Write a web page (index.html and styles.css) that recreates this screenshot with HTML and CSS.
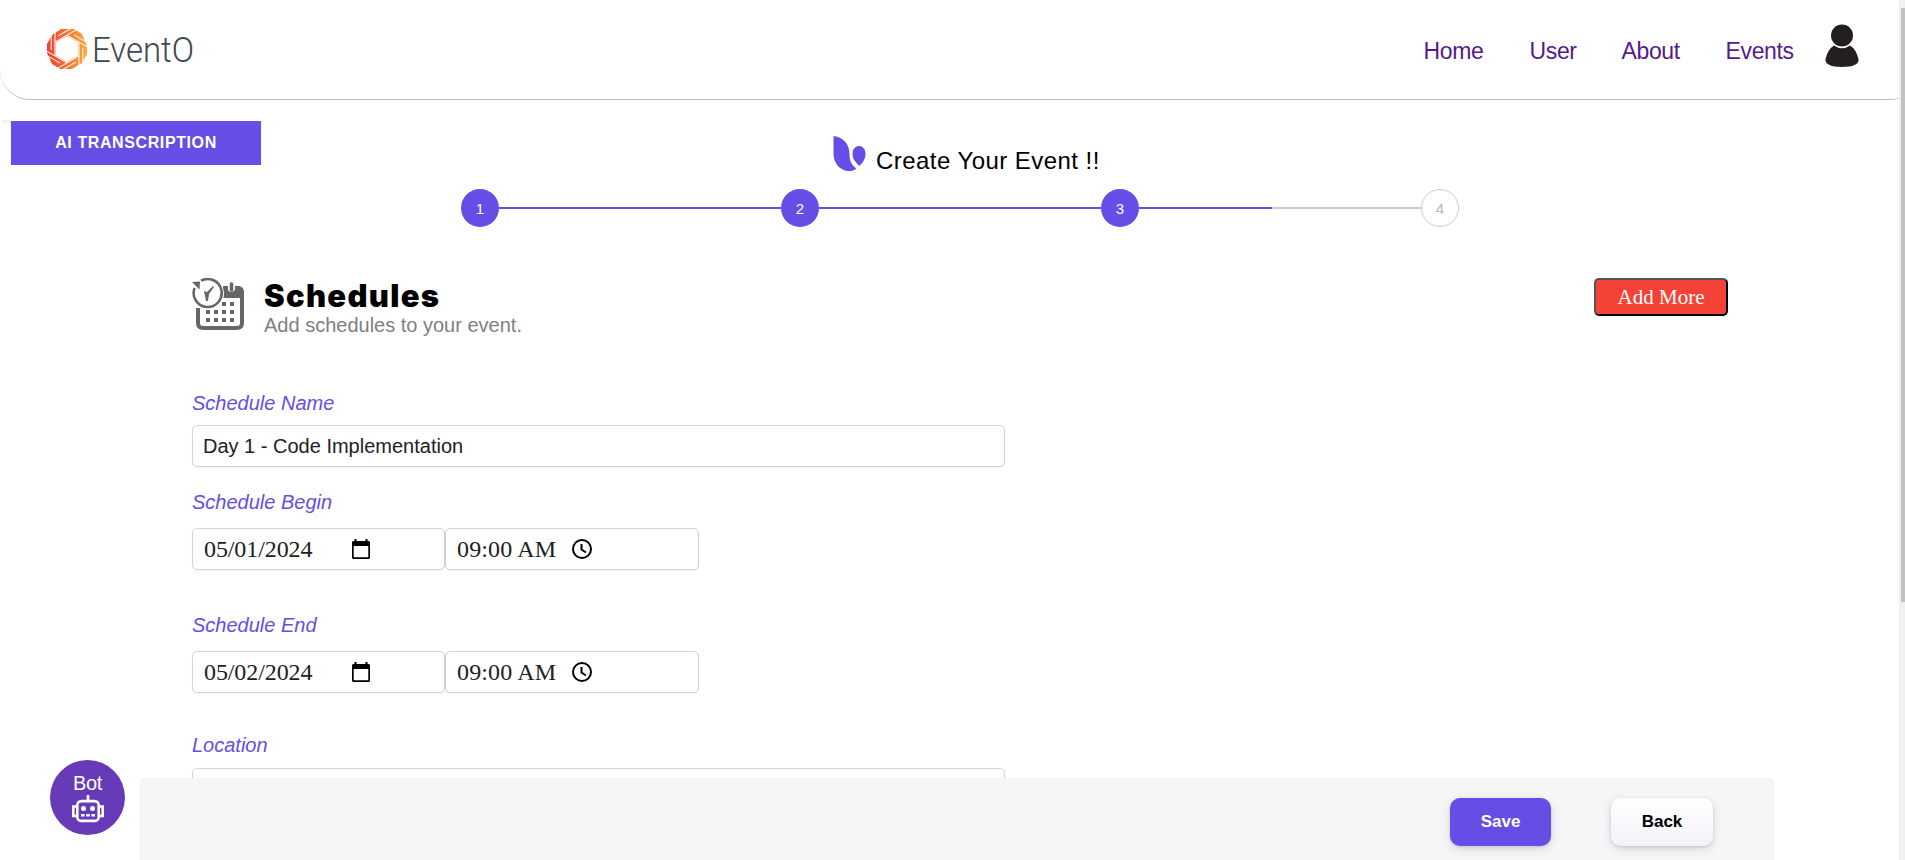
FILE: index.html
```html
<!DOCTYPE html>
<html lang="en">
<head>
<meta charset="utf-8">
<title>EventO</title>
<link rel="stylesheet" href="styles.css">
</head>
<body>
<div class="page">
  <header class="header">
    <div class="brand">
      <svg class="brand-mark" viewBox="0 0 42 42">
        <defs>
          <linearGradient id="g" x1="0" x2="1"><stop offset="0" stop-color="#f0402f"/><stop offset=".5" stop-color="#f47438"/><stop offset="1" stop-color="#fbab3c"/></linearGradient>
          <path id="blade" d="M-7 -12H17M-1 -15.800H14"/>
        </defs>
        <path fill="url(#g)" fill-rule="evenodd" d="M15 1h13l8 5 5 12v8l-5 9-10 6H14l-8-5-5-11v-9l5-9zM21 8L9.700 14.500v13L21 34l11.300-6.500v-13z"/>
        <g fill="none" stroke="#fff" stroke-width="1" transform="translate(21 21) rotate(30)">
          <use href="#blade"/><use href="#blade" transform="rotate(60)"/><use href="#blade" transform="rotate(120)"/><use href="#blade" transform="rotate(180)"/><use href="#blade" transform="rotate(240)"/><use href="#blade" transform="rotate(300)"/>
        </g>
      </svg>
      <svg class="brand-name" viewBox="0 0 110 44"><text x="0" y="34" textLength="102" lengthAdjust="spacingAndGlyphs">EventO</text></svg>
    </div>
    <nav class="nav">
      <a class="home">Home</a><a class="user">User</a><a class="about">About</a><a class="events">Events</a>
      <svg class="avatar" viewBox="0 0 34 44"><circle cx="17" cy="11.500" r="11"/><path d="M9 21.500Q17 27 25 21.500Q31 25 33.500 35Q34.500 43 17 43Q-.5 43 .5 35Q3 25 9 21.500Z"/></svg>
    </nav>
  </header>
  <main class="main">
    <div class="intro">
      <div class="tab"><span class="tab-edge"></span><button class="ai">AI TRANSCRIPTION</button></div>
      <h1 class="title">
        <svg class="leaf" viewBox="0 0 33 36"><path d="M.5 0C11 1 16.500 9 16.500 18c0 7 2 11 7 14.500C21 34.500 19 35 16 35 7 35 .5 27 .5 18z"/><path d="M26.500 30C21 25 19.500 22 19.500 18c0-5 3-8 6.500-8s6.500 3 6.500 8c0 4-2 8-6 12z"/></svg>
        <span>Create Your Event !!</span>
      </h1>
    </div>
    <div class="stepper">
      <span class="step">1</span><span class="bar"></span><span class="step">2</span><span class="bar"></span><span class="step">3</span><span class="bar half"></span><span class="step off">4</span>
    </div>
    <section class="heading">
      <svg class="sched" viewBox="0 0 52 52" fill="none" stroke="#666">
        <path stroke-width="4" d="M6 30v15q0 5 5 5h34q5 0 5-5V18"/>
        <path fill="#666" stroke="none" d="M31 8h5v4q3 4 7 0V8h4q5 1 5 6v6H31z"/>
        <path stroke-width="3.600" stroke-linecap="round" d="M39.500 6v6"/>
        <circle cx="15.500" cy="15.500" r="16.500" fill="#fff" stroke="none"/>
        <path stroke-width="2.600" d="M9 2.700A14 14 0 1 1 2.600 10"/>
        <path fill="#666" stroke="none" d="M0 4l8-.5-.5 8zM12 13l3 1 6-6 1 1-5 7-1 7-2 0z"/>
        <path stroke-width="4" stroke-dasharray="4 4" d="M30 26h14M14 34h30M14 42h30"/>
      </svg>
      <div class="heading-text"><h2>Schedules</h2><p>Add schedules to your event.</p></div>
      <button class="add">Add More</button>
    </section>
    <form class="form">
      <label>Schedule Name</label>
      <div class="field wide">Day 1 - Code Implementation</div>
      <label class="begin">Schedule Begin</label>
      <div class="pair">
        <div class="field date"><span>05/01/2024</span><svg class="cal" viewBox="0 0 20 20"><path fill-rule="evenodd" d="M3.500 0h2v2h9V0h2v2H18l1 1v16l-1 1H2l-1-1V3l1-1h1.500zM2.700 7v11.300h14.600V7z"/></svg></div>
        <div class="field time"><span>09:00 AM</span><svg class="clock" viewBox="0 0 20 20"><circle cx="10" cy="10" r="9"/><path d="M9.500 5v5.500l4.500 3"/></svg></div>
      </div>
      <label class="end">Schedule End</label>
      <div class="pair">
        <div class="field date"><span>05/02/2024</span><svg class="cal" viewBox="0 0 20 20"><path fill-rule="evenodd" d="M3.500 0h2v2h9V0h2v2H18l1 1v16l-1 1H2l-1-1V3l1-1h1.500zM2.700 7v11.300h14.600V7z"/></svg></div>
        <div class="field time"><span>09:00 AM</span><svg class="clock" viewBox="0 0 20 20"><circle cx="10" cy="10" r="9"/><path d="M9.500 5v5.500l4.500 3"/></svg></div>
      </div>
      <label class="loc">Location</label>
      <div class="field wide"></div>
    </form>
  </main>
  <footer class="actions"><button class="save">Save</button><button class="back">Back</button></footer>
  <div class="bot"><span>Bot</span>
    <svg viewBox="0 0 32 28" fill="none" stroke="#fff" stroke-width="2.600"><rect x="5.300" y="6.100" width="21.400" height="19.800" rx="4"/><path d="M16 0v6M5 11.500H1.300v9.500H5M27 11.500h3.700v9.500H27"/><g fill="#fff" stroke="none"><circle cx="11.500" cy="13.500" r="2.500"/><circle cx="20.500" cy="13.500" r="2.500"/><path d="M9 19h3.600v2.500H9zM14.200 19h3.600v2.500h-3.600zM19.400 19H23v2.500h-3.600z"/></g></svg>
  </div>
</div>
<div class="scrollbar"><div class="thumb"></div></div>
</body>
</html>
```

FILE: styles.css
```css
* { box-sizing: border-box; }
body { margin: 0; height: 860px; display: flex; overflow: hidden; background: #fff; font-family: "Liberation Sans", Arial, sans-serif; }
button { font-family: inherit; padding: 0; }
.page { position: relative; width: 1899px; height: 860px; overflow: hidden; }
.scrollbar { width: 6px; height: 860px; background: #f0f0f0; padding: 8px 0 0 2px; }
.thumb { height: 594px; background: #c1c1c1; }

.header { width: 1920px; height: 100px; border-bottom: 1px solid #bcbfc4; border-radius: 0 0 30px 30px; display: flex; justify-content: space-between; padding-left: 46px; }
.brand { display: flex; padding-top: 28px; gap: 4px; }
.brand-mark { width: 42px; height: 42px; }
.brand-name { width: 110px; height: 44px; overflow: visible; }
.brand-name text { font: 300 35px/1 Roboto, sans-serif; fill: #40464f; }
.nav { display: flex; padding-top: 38px; width: 497px; font-size: 23px; line-height: 26px; color: #551a8b; letter-spacing: -0.35px; }
.nav a { margin-left: 0.5px; margin-right: -0.5px; }
.home { width: 106px; }
.user { width: 92px; }
.about { width: 104px; }
.events { width: 100px; }
.avatar { width: 34px; height: 44px; margin-top: -14px; fill: #231f20; }

.intro { display: flex; height: 89px; padding-top: 20px; }
.tab { display: flex; padding-left: 3px; }
.tab-edge { width: 8px; height: 3px; background: #f0f0f0; }
.ai { width: 250px; height: 44px; margin-top: 1px; border: 0; background: #664de5; color: #fff; font-size: 16px; font-weight: 700; letter-spacing: 0.6px; }
.title { display: flex; margin: 16px 0 0 572px; font-size: 24px; font-weight: 400; line-height: 28px; }
.leaf { width: 33px; height: 36px; fill: #664de5; margin-right: 10px; }
.title span { padding-top: 11px; letter-spacing: 0.45px; white-space: nowrap; }

.stepper { display: flex; align-items: center; width: 998px; height: 38px; margin-left: 461px; }
.step { flex: none; width: 38px; height: 38px; border-radius: 50%; background: #664de5; color: #fff; font-size: 15px; line-height: 40px; text-align: center; }
.step.off { background: #fff; border: 1px solid #ccc; color: #b5b5b5; line-height: 38px; }
.bar { flex: 1; height: 2px; background: #664de5; }
.bar.half { background: linear-gradient(90deg, #664de5 133px, #ccc 133px); }

.heading { display: flex; margin: 51px 171px 0 192px; height: 112px; }
.sched { width: 52px; height: 52px; }
.heading-text { flex: 1; padding-left: 20px; }
h2 { margin: 1px 0 0; font: 900 31px/34px Inter, sans-serif; letter-spacing: 1.3px; }
p { margin: 0; font-size: 20px; line-height: 24px; color: #808080; }
.add { width: 134px; height: 38px; border: 2px outset #000; border-radius: 5px; background: #f44336; color: #fff; font: 21px "Liberation Serif", serif; }

.form { padding-left: 192px; }
label { display: block; height: 35px; color: #664de5; font-size: 20px; font-style: italic; line-height: 26px; }
.field { display: flex; align-items: center; width: 253px; height: 42px; border: 1px solid #d3d3d3; border-radius: 5px; background: #fff; padding-left: 11px; color: #212121; font: 24px "Liberation Serif", serif; box-shadow: 0 1px 2px rgba(0,0,0,.05); }
.field.wide { width: 813px; padding-left: 10px; font: 20px "Liberation Sans", Arial, sans-serif; }
.begin { height: 41px; margin-top: 20px; padding-top: 2px; }
.end { height: 41px; margin-top: 40px; padding-top: 2px; }
.loc { height: 36px; margin-top: 39px; }
.pair { display: flex; }
.field.time { width: 254px; }
.date span { width: 147px; letter-spacing: -0.1px; }
.time span { width: 115px; letter-spacing: 0.15px; }
.cal, .clock { width: 20px; height: 20px; }
.clock { fill: none; stroke: #000; stroke-width: 2; }

.actions { position: absolute; left: 140px; top: 778px; width: 1634px; height: 90px; border: 1px solid #f2f2f2; border-radius: 4px; background: #f6f6f6; display: flex; justify-content: flex-end; gap: 60px; padding: 19px 60px 0 0; }
.actions button { width: 101px; height: 48px; border: 0; border-radius: 10px; font-size: 17px; font-weight: 700; box-shadow: 0 3px 10px rgba(37,44,97,.15), 0 1px 3px rgba(93,100,148,.2); }
.actions .save { background: #664de5; color: #fff; }
.actions .back { width: 102px; background: linear-gradient(#fff, #f3f2f9); color: #000; }
.bot { position: absolute; left: 50px; top: 760px; width: 75px; height: 75px; border-radius: 50%; background: #673ab7; color: #fff; display: flex; flex-direction: column; align-items: center; padding-top: 11px; font-size: 20px; line-height: 24px; }
.bot span { letter-spacing: -0.3px; }
.bot svg { width: 32px; height: 28px; flex: none; }
```
